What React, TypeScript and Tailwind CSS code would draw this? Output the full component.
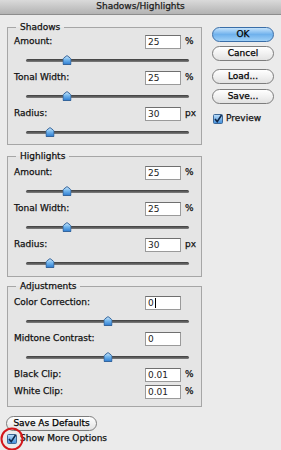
import React from 'react';

type Slider = { label: string; value: string; unit?: string; pos: number; caret?: boolean };

const shadows: Slider[] = [
  { label: 'Amount:', value: '25', unit: '%', pos: 25 },
  { label: 'Tonal Width:', value: '25', unit: '%', pos: 25 },
  { label: 'Radius:', value: '30', unit: 'px', pos: 15 },
];

const highlights: Slider[] = [
  { label: 'Amount:', value: '25', unit: '%', pos: 25 },
  { label: 'Tonal Width:', value: '25', unit: '%', pos: 25 },
  { label: 'Radius:', value: '30', unit: 'px', pos: 15 },
];

const adjustments: Slider[] = [
  { label: 'Color Correction:', value: '0', pos: 50, caret: true },
  { label: 'Midtone Contrast:', value: '0', pos: 50 },
];

const Thumb = () => (
  <svg width="9" height="10" viewBox="0 0 9 10">
    <defs>
      <linearGradient id="thumbFill" x1="0" y1="0" x2="0" y2="1">
        <stop offset="0" stopColor="#d6ecfc" />
        <stop offset="0.45" stopColor="#76b8ee" />
        <stop offset="1" stopColor="#2c7bd0" />
      </linearGradient>
    </defs>
    <path d="M0.5 9.5 V4.6 Q0.5 3.6 1.4 2.9 L4.5 0.6 L7.6 2.9 Q8.5 3.6 8.5 4.6 V9.5 Z" fill="url(#thumbFill)" stroke="#35659c" strokeWidth="1" />
  </svg>
);

// text fields render lighter than the labels
const Field = ({ value, caret }: { value: string; caret?: boolean }) => (
  <div className="flex h-[14px] w-[36px] items-center border border-[#9a9a9a] border-t-[#6f6f6f] bg-white pl-[2px] text-[9px] leading-none text-[#222] [-webkit-text-stroke:0]">
    {value}
    {caret && <span className="ml-[1px] h-[10px] w-px bg-black" />}
  </div>
);

const InputRow = ({ label, value, unit, caret }: { label: string; value: string; unit?: string; caret?: boolean }) => (
  <div className="flex h-[14px] items-center">
    <span className="flex-1">{label}</span>
    <Field value={value} caret={caret} />
    <span className="ml-[4px] w-[16px]">{unit}</span>
  </div>
);

const SliderBlock = ({ s }: { s: Slider }) => (
  <>
    <InputRow label={s.label} value={s.value} unit={s.unit} caret={s.caret} />
    <div className="relative mx-[12px] h-[22px]">
      <div className="absolute left-0 right-0 top-[10px] h-[3px] rounded-full bg-gradient-to-b from-[#3c3c3c] to-[#808080]" />
      <div className="absolute top-[6px] -translate-x-1/2" style={{ left: `${s.pos}%` }}>
        <Thumb />
      </div>
    </div>
  </>
);

const Group = ({ title, className, children }: { title: string; className: string; children: React.ReactNode }) => (
  <fieldset className={`border border-[#a6a6a6] bg-[#e5e5e5] pl-[6px] ${className}`}>
    <legend className="ml-[2px] px-[4px] leading-[12px]">{title}</legend>
    {children}
  </fieldset>
);

const PillButton = ({ label, primary, className = '' }: { label: string; primary?: boolean; className?: string }) => (
  <button
    className={`flex h-[15px] items-center justify-center rounded-full border text-[9px] leading-none text-black ${
      primary
        ? 'border-[#3a6ea8] bg-gradient-to-b from-[#c4e2fb] via-[#6fb1ec] to-[#9fd0f7]'
        : 'border-[#7d7d7d] bg-gradient-to-b from-white via-[#f1f1f1] to-[#e2e2e2]'
    } ${className}`}
  >
    {label}
  </button>
);

const Check = () => (
  <svg width="10" height="10" viewBox="0 0 10 10">
    <defs>
      <linearGradient id="boxFill" x1="0" y1="0" x2="0" y2="1">
        <stop offset="0" stopColor="#bfe0fb" />
        <stop offset="1" stopColor="#3f8ddb" />
      </linearGradient>
    </defs>
    <rect x="0.5" y="0.5" width="9" height="9" rx="1" fill="url(#boxFill)" stroke="#3d6796" />
    <path d="M2 5 L4.2 7.6 L8.6 1" fill="none" stroke="#10284a" strokeWidth="1.6" />
  </svg>
);

export default function App() {
  return (
    <div className="h-[450px] w-[281px] overflow-hidden bg-[#ebebeb] font-['DejaVu_Sans',sans-serif] text-[9px] text-[#111] [-webkit-text-stroke:0.25px_currentColor]">
      <div className="flex h-[15px] items-center justify-center border-b border-[#8d8d8d] bg-gradient-to-b from-[#dadada] to-[#b3b3b3] text-[9px] text-[#1c1c1c]">
        Shadows/Highlights
      </div>
      <div className="flex pl-[7px]">
        <div className="w-[195px] pt-[6px]">
          <Group title="Shadows" className="pb-[1px] pt-[2px]">
            {shadows.map((s) => (
              <SliderBlock key={s.label} s={s} />
            ))}
          </Group>
          <Group title="Highlights" className="mt-[5px] pb-[2px] pt-[4px]">
            {highlights.map((s) => (
              <SliderBlock key={s.label} s={s} />
            ))}
          </Group>
          <Group title="Adjustments" className="mt-[3px] pb-[7px] pt-[4px]">
            {adjustments.map((s) => (
              <SliderBlock key={s.label} s={s} />
            ))}
            <InputRow label="Black Clip:" value="0.01" unit="%" />
            <div className="mt-[3px]">
              <InputRow label="White Clip:" value="0.01" unit="%" />
            </div>
          </Group>
          <PillButton label="Save As Defaults" className="ml-[-1px] mt-[9px] w-[91px]" />
          <div className="mt-[2px] flex h-[11px] items-center">
            <div className="relative flex h-[10px] w-[10px]">
              <Check />
              <svg className="absolute left-[-7px] top-[-7px]" width="24" height="24" viewBox="0 0 24 24">
                <circle cx="12" cy="12" r="10.5" fill="none" stroke="#d3181c" strokeWidth="2" />
              </svg>
            </div>
            <span className="ml-[3px]">Show More Options</span>
          </div>
        </div>
        <div className="ml-[10px] flex w-[62px] flex-col pt-[12px]">
          <PillButton label="OK" primary />
          <PillButton label="Cancel" className="mt-[4px]" />
          <PillButton label="Load..." className="mt-[8px]" />
          <PillButton label="Save..." className="mt-[5px]" />
          <div className="mt-[9px] flex h-[11px] items-center pl-[1px]">
            <Check />
            <span className="ml-[3px]">Preview</span>
          </div>
        </div>
      </div>
    </div>
  );
}
